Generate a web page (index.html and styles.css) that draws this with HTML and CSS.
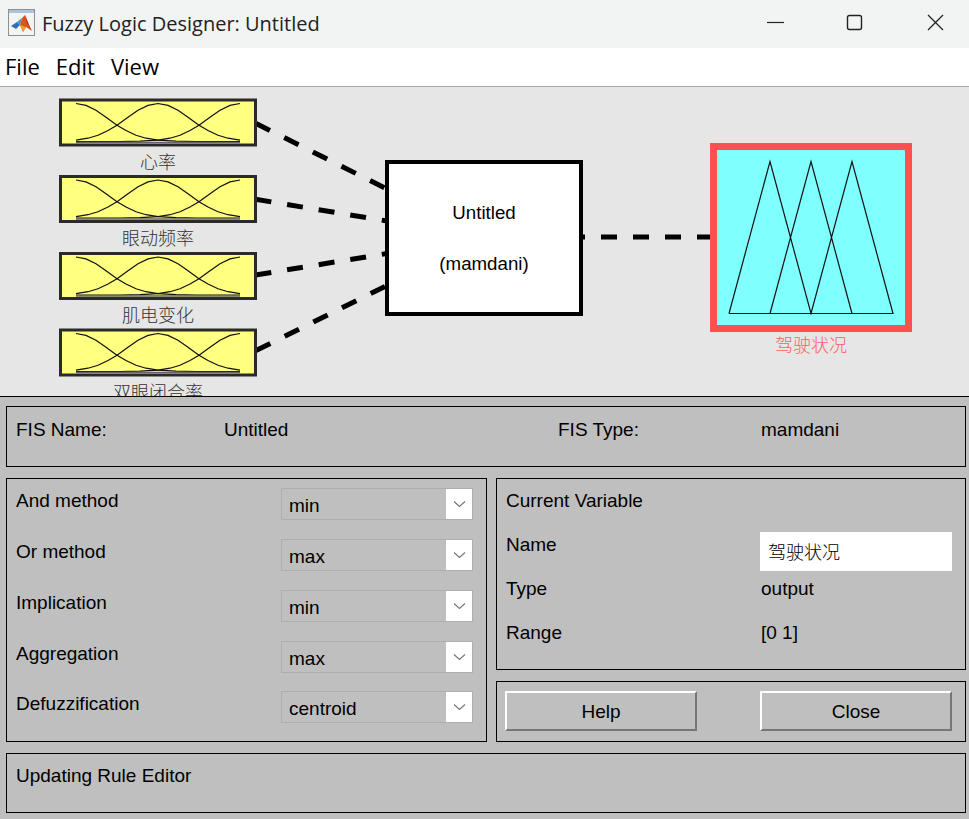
FILE: index.html
```html
<!DOCTYPE html>
<html>
	<head>
		<meta charset="UTF-8">
		<title>Fuzzy Logic Designer: Untitled</title>
		<link rel="stylesheet" href="styles.css">
	</head>
	<body>
		<!-- window title -->
		<div class="titlebar">
			<svg class="appicon" width="28" height="28" viewBox="0 0 28 28">
				<rect x="0.5" y="0.5" width="26" height="26" fill="#f4f4f4" stroke="#8f8f8f"/>
				<rect x="1" y="1" width="25" height="3" fill="#a9c4de"/>
				<polygon points="3,17 9,13 12,16 8,20" fill="#2f6fb5"/>
				<polygon points="9,13 14,9 12,16" fill="#3d9bc8"/>
				<polygon points="12,16 14,9 17,6 21,16 24,22 18,18 15,23" fill="#d9541e"/>
				<polygon points="15,23 12,16 18,18" fill="#f0a020"/>
				<polygon points="17,6 21,16 24,22 19,14" fill="#a52a12"/>
			</svg>
			<span class="apptitle">Fuzzy Logic Designer: Untitled</span>
			<div class="wincontrols">
				<svg width="80" height="48" viewBox="0 0 80 48"><path d="M32 22.5H49" stroke="#222" stroke-width="1.2"/></svg>
				<svg width="80" height="48" viewBox="0 0 80 48"><rect x="32.5" y="15.5" width="14" height="14" rx="2" fill="none" stroke="#222" stroke-width="1.4"/></svg>
				<svg width="74" height="48" viewBox="0 0 74 48"><path d="M33 15L48 30M48 15L33 30" stroke="#222" stroke-width="1.3" fill="none"/></svg>
			</div>
		</div>

		<!-- menu -->
		<div class="menubar">
			<span>File</span>
			<span>Edit</span>
			<span>View</span>
		</div>

		<!-- system diagram, drawn in page coordinates -->
		<svg class="diagram" width="969" height="309" viewBox="0 87 969 309">
			<defs>
				<g id="inputmf">
					<rect x="60.5" y="100" width="195" height="45" fill="#ffff80" stroke="#2a2a2a" stroke-width="3"/>
					<g fill="none" stroke="#111" stroke-width="1.2">
						<polyline points="76,103.5 86,105.4 96,110.3 106,117.2 117,125.2 126,130.5 136,135.2 146,138.2 158,140.2 176,141.2 196,141.5 240,141.5"/>
						<polyline points="76,140.2 88,138.2 98,135.2 108,130.5 117,125.2 128,117.2 138,110.3 148,105.4 158,103.5 168,105.4 178,110.3 188,117.2 199,125.2 208,130.5 218,135.2 228,138.2 240,140.2"/>
						<polyline points="76,141.5 120,141.5 140,141.2 158,140.2 170,138.2 180,135.2 190,130.5 199,125.2 210,117.2 220,110.3 230,105.4 240,103.5"/>
					</g>
					<path d="M76 142.5H240" stroke="#666" stroke-width="1.5"/>
				</g>
			</defs>

			<g class="wires">
				<path d="M255.6 123.3L387 189"/>
				<path d="M255.5 199.3L387 221"/>
				<path d="M255.5 275L387 253.5"/>
				<path d="M256 350.5L387 285.5"/>
				<path d="M569 237H711"/>
			</g>

			<use href="#inputmf"/>
			<use href="#inputmf" y="76.5"/>
			<use href="#inputmf" y="153.5"/>
			<use href="#inputmf" y="230"/>

			<text class="cjk" x="158" y="169">心率</text>
			<text class="cjk" x="158" y="245">眼动频率</text>
			<text class="cjk" x="158" y="322">肌电变化</text>
			<text class="cjk" x="158" y="399">双眼闭合率</text>

			<rect x="387" y="162" width="194" height="152" fill="#fff" stroke="#000" stroke-width="4"/>
			<text class="sys" x="484" y="219">Untitled</text>
			<text class="sys" x="484" y="270">(mamdani)</text>

			<rect x="713.5" y="146.5" width="195" height="182" fill="#80ffff" stroke="#ff5050" stroke-width="7"/>
			<path d="M729 313.5L770 161.5L811 313.5L852 161.5L893 313.5H729M770 313.5L811 161.5L852 313.5" fill="none" stroke="#111" stroke-width="1.2"/>
			<text class="cjk selected" x="811" y="352">驾驶状况</text>
		</svg>

		<!-- control panels -->
		<div class="panel">
			<div class="box fisbox">
				<span>FIS Name:</span>
				<span>Untitled</span>
				<span>FIS Type:</span>
				<span>mamdani</span>
			</div>

			<div class="middle">
				<div class="box methods">
					<span class="mlabel">And method</span>
					<div class="dropdown"><span>min</span><i class="arrow"><svg width="13" height="8" viewBox="0 0 13 8"><path d="M1 1.5L6.5 6.5L12 1.5" fill="none" stroke="#777" stroke-width="1.2"/></svg></i></div>
					<span class="mlabel">Or method</span>
					<div class="dropdown"><span>max</span><i class="arrow"><svg width="13" height="8" viewBox="0 0 13 8"><path d="M1 1.5L6.5 6.5L12 1.5" fill="none" stroke="#777" stroke-width="1.2"/></svg></i></div>
					<span class="mlabel">Implication</span>
					<div class="dropdown"><span>min</span><i class="arrow"><svg width="13" height="8" viewBox="0 0 13 8"><path d="M1 1.5L6.5 6.5L12 1.5" fill="none" stroke="#777" stroke-width="1.2"/></svg></i></div>
					<span class="mlabel">Aggregation</span>
					<div class="dropdown"><span>max</span><i class="arrow"><svg width="13" height="8" viewBox="0 0 13 8"><path d="M1 1.5L6.5 6.5L12 1.5" fill="none" stroke="#777" stroke-width="1.2"/></svg></i></div>
					<span class="mlabel last">Defuzzification</span>
					<div class="dropdown last"><span>centroid</span><i class="arrow"><svg width="13" height="8" viewBox="0 0 13 8"><path d="M1 1.5L6.5 6.5L12 1.5" fill="none" stroke="#777" stroke-width="1.2"/></svg></i></div>
				</div>

				<div class="box current">
					<div class="curtitle">Current Variable</div>
					<div class="currow">
						<span>Name</span>
						<input class="varname" type="text" value="驾驶状况">
					</div>
					<div class="currow plain">
						<span>Type</span>
						<span>output</span>
					</div>
					<div class="currow plain">
						<span>Range</span>
						<span>[0 1]</span>
					</div>
				</div>

				<div class="box buttons">
					<button>Help</button>
					<button>Close</button>
				</div>
			</div>

			<div class="box status">Updating Rule Editor</div>
		</div>
	</body>
</html>
```

FILE: styles.css
```css
html {
	background-color: #bfbfbf;
}
body {
	margin: 0;
	width: 969px;
	height: 819px;
	overflow: hidden;
	font-family: "Liberation Sans", Arial, sans-serif;
	font-size: 19px;
	color: #000;
}
.titlebar {
	display: flex;
	align-items: center;
	height: 48px;
	background-color: #f2f3f3;
}
.appicon {
	margin-left: 8px;
	margin-right: 6px;
	margin-top: -2px;
}
.apptitle {
	font-family: "Open Sans", sans-serif;
	font-size: 20px;
	color: #222;
	margin-top: -2px;
}
.wincontrols {
	display: flex;
	margin-left: auto;
}
.menubar {
	display: flex;
	gap: 16px;
	align-items: center;
	height: 39px;
	padding-left: 5px;
	padding-bottom: 2px;
	background-color: #fff;
	font-family: "Open Sans", sans-serif;
	font-size: 22px;
	box-sizing: border-box;
	border-bottom: 1px solid #a8a8a8;
}
.diagram {
	display: block;
	background-color: #e6e6e6;
}
.wires path {
	fill: none;
	stroke: #000;
	stroke-width: 5;
	stroke-dasharray: 16 16;
}
.cjk {
	font-family: "Noto Sans CJK SC", sans-serif;
	font-size: 18px;
	font-weight: 300;
	text-anchor: middle;
	fill: #333;
}
.selected {
	fill: #ff6060;
}
.sys {
	font-size: 18.7px;
	text-anchor: middle;
}
.panel {
	display: grid;
	row-gap: 11px;
	height: 423px;
	box-sizing: border-box;
	padding: 9px 3px 6px 6px;
	background-color: #bfbfbf;
	border-top: 1px solid #000;
}
.box {
	box-sizing: border-box;
	border: 1px solid #000;
}
.fisbox {
	display: grid;
	grid-template-columns: 208px 334px 203px 1fr;
	height: 61px;
	padding: 10px 9px;
	line-height: 26px;
}
.middle {
	display: grid;
	grid-template-columns: 481px 470px;
	grid-template-rows: 192px 61px;
	gap: 11px 9px;
}
.methods {
	grid-row: 1/3;
	display: grid;
	grid-template-columns: 265px 192px;
	grid-auto-rows: 32px;
	row-gap: 19px;
	padding: 9px 9px;
	align-items: start;
}
.mlabel {
	line-height: 26px;
}
.last {
	margin-top: -1px;
}
.dropdown {
	display: flex;
	justify-content: space-between;
	box-sizing: border-box;
	height: 32px;
	border: 1px solid #adadb2;
	line-height: 33px;
	padding-left: 7px;
}
.arrow {
	display: flex;
	align-items: center;
	justify-content: center;
	width: 26px;
	background-color: #fff;
}
.current {
	padding: 9px 9px;
}
.curtitle {
	line-height: 26px;
	height: 44px;
}
.currow {
	display: grid;
	grid-template-columns: 255px 191px;
	height: 44px;
	line-height: 26px;
}
.varname {
	box-sizing: border-box;
	width: 192px;
	height: 39px;
	margin-left: -1px;
	padding: 0 8px 2px;
	border: none;
	background-color: #fff;
	font-family: "Noto Sans CJK SC", sans-serif;
	font-size: 18px;
	font-weight: 300;
	color: #000;
}
.buttons {
	display: flex;
	justify-content: space-between;
	padding: 9px 13px 9px 8px;
}
button {
	width: 192px;
	height: 40px;
	padding: 2px 0 0;
	background-color: #bfbfbf;
	border: 2px solid;
	border-color: #fff #777 #777 #fff;
	font-family: "Liberation Sans", Arial, sans-serif;
	font-size: 19px;
	color: #000;
}
.status {
	height: 60px;
	padding: 9px;
	line-height: 26px;
}
```
